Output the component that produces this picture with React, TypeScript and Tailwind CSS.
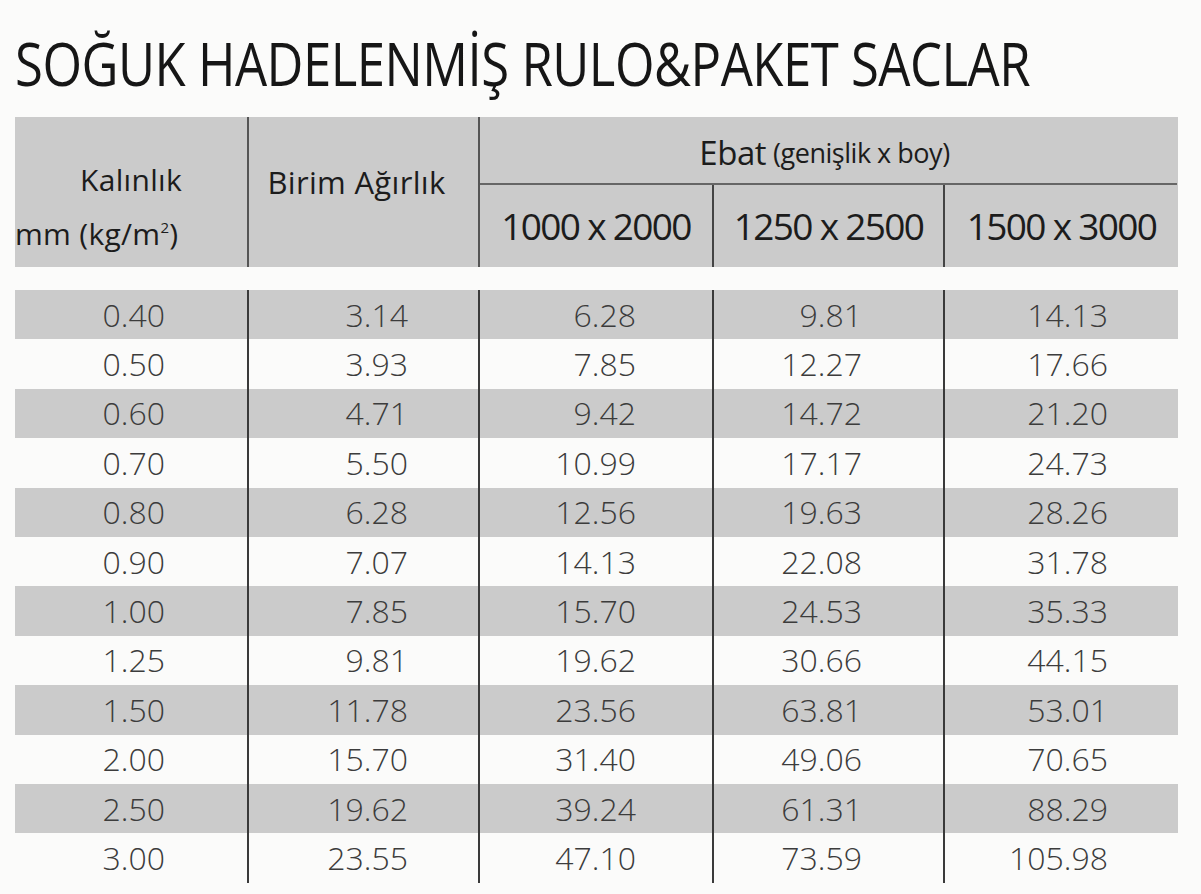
const rows: string[][] = [
  ["0.40", "3.14", "6.28", "9.81", "14.13"],
  ["0.50", "3.93", "7.85", "12.27", "17.66"],
  ["0.60", "4.71", "9.42", "14.72", "21.20"],
  ["0.70", "5.50", "10.99", "17.17", "24.73"],
  ["0.80", "6.28", "12.56", "19.63", "28.26"],
  ["0.90", "7.07", "14.13", "22.08", "31.78"],
  ["1.00", "7.85", "15.70", "24.53", "35.33"],
  ["1.25", "9.81", "19.62", "30.66", "44.15"],
  ["1.50", "11.78", "23.56", "63.81", "53.01"],
  ["2.00", "15.70", "31.40", "49.06", "70.65"],
  ["2.50", "19.62", "39.24", "61.31", "88.29"],
  ["3.00", "23.55", "47.10", "73.59", "105.98"],
];

// right padding per column so the figures line up like the print
const cellPad = ["pr-[82px]", "pr-[70px]", "pr-[76px]", "pr-[81px]", "pr-[70px]"];

export default function App() {
  return (
    <div className="min-h-[894px] w-[1201px] bg-[#fbfbfa] font-['Open_Sans',sans-serif] text-[#1c1c1c]">
      <h1 className="pl-[15px] pt-[30px] text-[60px] leading-[66px] text-[#161616]">
        <span className="inline-block origin-left scale-x-[0.848] whitespace-nowrap tracking-[-0.01em]">
          SOĞUK HADELENMİŞ RULO&amp;PAKET SACLAR
        </span>
      </h1>

      {/* Header */}
      <div className="ml-[15px] mt-[21px] grid h-[150px] w-[1163px] grid-cols-[232px_231px_699px] bg-[#cbcbcb]">
        <div className="flex flex-col justify-center pt-[30px] text-[30px] leading-[54px] tracking-[0.01em]">
          <span className="text-center">Kalınlık</span>
          <span className="text-left">
            mm (kg/m<sup className="-top-[12px] text-[15px]">2</sup>)
          </span>
        </div>
        <div className="border-l-2 border-[#555] pr-[14px] pt-[47px] text-center text-[31px] leading-[36px] tracking-[0.01em]">
          Birim Ağırlık
        </div>
        <div className="flex flex-col border-l-2 border-[#555]">
          <div className="flex h-[68px] items-center justify-center border-b-2 border-[#666] pt-[6px] pr-[8px] tracking-[-0.03em]">
            <span className="text-[33px]">Ebat</span>
            <span className="ml-[7px] text-[27px]">(genişlik x boy)</span>
          </div>
          <div className="grid flex-1 grid-cols-[232px_231px_235px] text-[37px] tracking-[-0.045em]">
            <div className="flex items-center justify-center">1000 x 2000</div>
            <div className="flex items-center justify-center border-l-2 border-[#444]">1250 x 2500</div>
            <div className="flex items-center justify-center border-l-2 border-[#444]">1500 x 3000</div>
          </div>
        </div>
      </div>

      {/* Data rows */}
      <div className="ml-[15px] mt-[23px] w-[1163px]">
        {rows.map((row, i) => (
          <div
            key={row[0]}
            className={`grid h-[49.4px] grid-cols-[232px_231px_234px_231px_235px] ${
              i % 2 === 0 ? "bg-[#cbcbcb]" : ""
            }`}
          >
            {row.map((v, j) => (
              <div
                key={j}
                className={`flex items-center justify-end text-[32px] font-light text-[#3c3c3c] ${cellPad[j]} ${
                  j > 0 ? "border-l-2 border-[#3a3a3a]" : ""
                }`}
              >
                {v}
              </div>
            ))}
          </div>
        ))}
      </div>
    </div>
  );
}
